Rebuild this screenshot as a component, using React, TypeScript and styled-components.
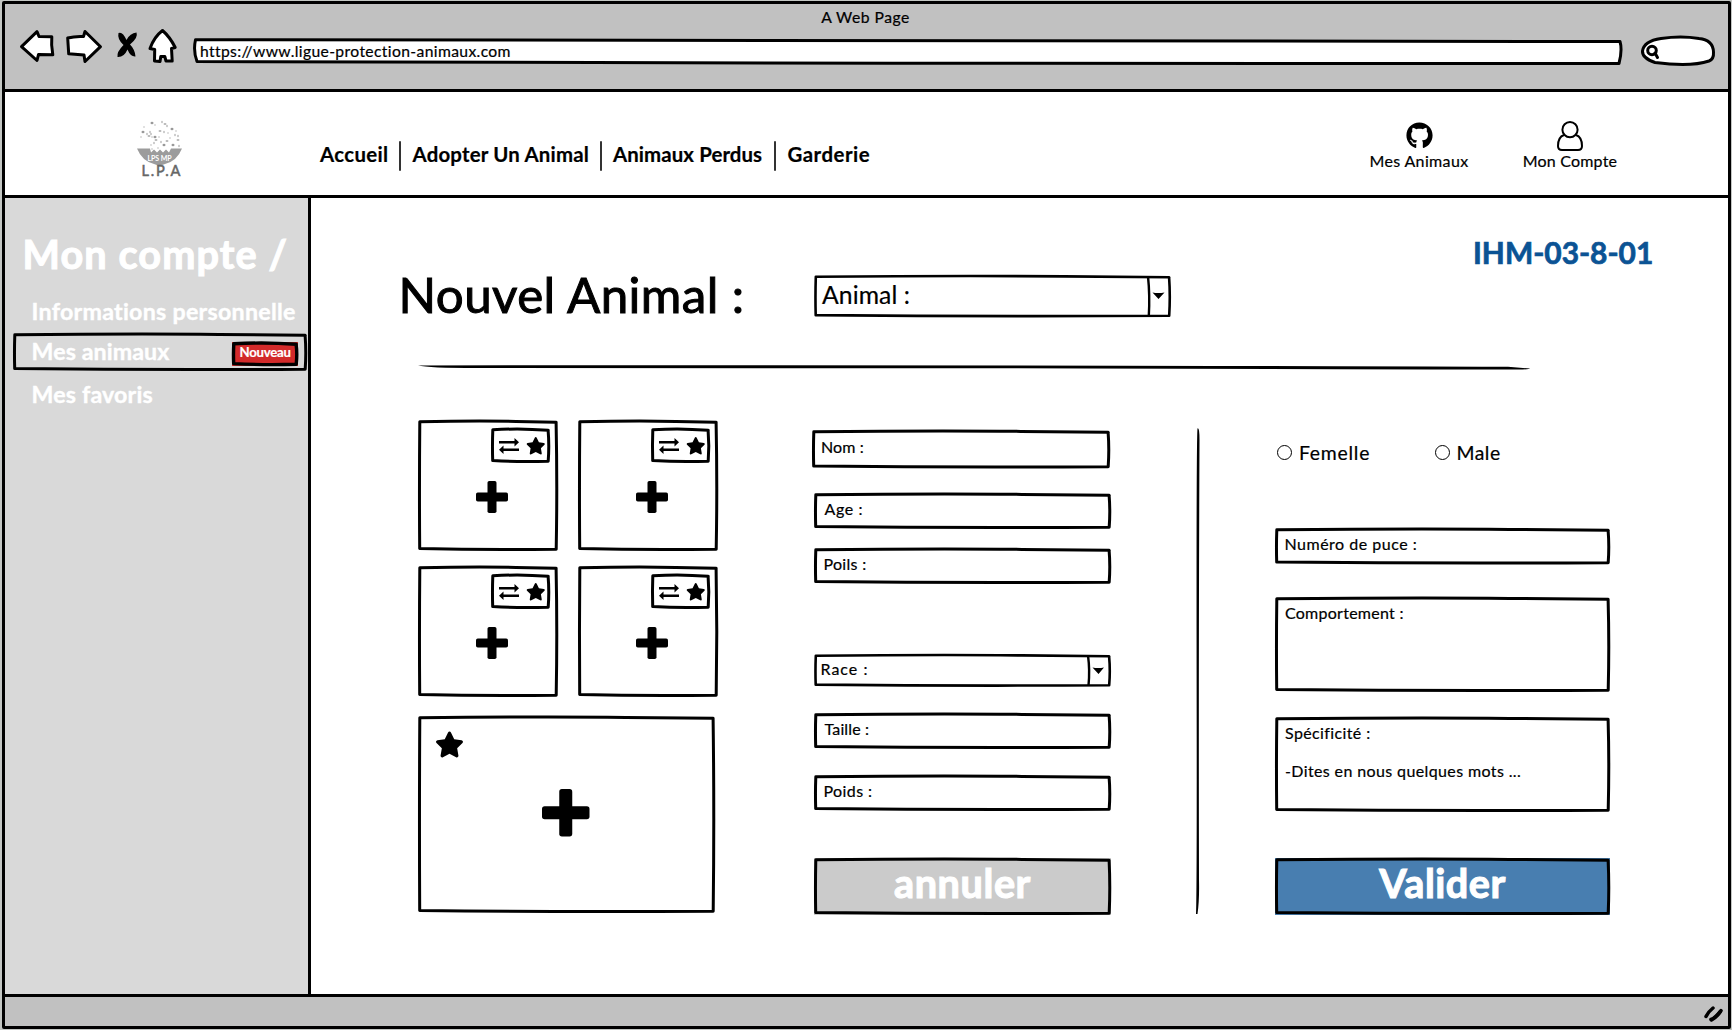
import React from 'react';
import styled, { createGlobalStyle } from 'styled-components';
import { FaGithub, FaStar } from 'react-icons/fa';

const GlobalStyle = createGlobalStyle`
  * { box-sizing: border-box; }
  body { margin: 0; background: #fff; font-family: Lato, "Open Sans", sans-serif; color: #000; }
  svg { display: block; overflow: visible; flex: none; }
`;

/* ---------- text ---------- */

const Label = styled.span<{ $size?: number; $bold?: boolean; $space?: number; $color?: string; $stroke?: number }>`
  display: block;
  flex: none;
  white-space: pre;
  line-height: 1.2;
  font-size: ${p => p.$size ?? 16}px;
  font-weight: ${p => (p.$bold ? 700 : 400)};
  letter-spacing: ${p => p.$space ?? 0.3}px;
  color: ${p => p.$color ?? '#000'};
  -webkit-text-stroke: ${p => p.$stroke ?? 0.2}px currentColor;
`;

/* ---------- hand-drawn outline ---------- */

const OutlineSvg = styled.svg`
  position: absolute;
  inset: 0;
  pointer-events: none;
`;

function Outline({ w, h, stroke = 3 }: { w: number; h: number; stroke?: number }) {
  return (
    <OutlineSvg width={w} height={h} fill="none" stroke="#000" strokeWidth={stroke} strokeLinejoin="round">
      <path
        d={`M1.8 1.8 Q${w * 0.4} 0.5 ${w * 0.7} 1.4 T${w - 1.9} 2.2 Q${w - 0.6} ${h * 0.5} ${w - 1.8} ${h - 1.8}
            Q${w * 0.5} ${h - 0.8} 1.7 ${h - 2.4} Q1.2 ${h * 0.5} 1.8 1.8 Z`}
      />
    </OutlineSvg>
  );
}

/* ---------- browser frame ---------- */

const Screen = styled.div`
  width: 1732px;
  height: 1030px;
  padding: 1px 1px 1px 2px;
  background: #c3c6c3;
`;
const Frame = styled.div`
  display: flex;
  flex-direction: column;
  height: 1028px;
  border: 3px solid #000;
  border-radius: 2px;
  background: #fff;
`;
const Chrome = styled.div`
  height: 88px;
  flex: none;
  background: #c1c1c1;
  border-bottom: 3px solid #000;
`;
const TitleLine = styled.div`
  height: 24px;
  padding: 2px 2px 0 0;
  display: flex;
  justify-content: center;
  align-items: center;
`;
const NavRow = styled.div`
  display: flex;
  align-items: flex-start;
  padding-left: 14px;
`;
const NavIcon = styled.svg<{ $left?: number; $top: number }>`
  margin: ${p => p.$top}px 0 0 ${p => p.$left ?? 0}px;
`;
const UrlBar = styled.div`
  position: relative;
  width: 1430px;
  height: 27px;
  margin: 10px 0 0 15.5px;
  padding: 4px 0 0 7.5px;
`;
const UrlShape = styled.svg`
  position: absolute;
  inset: 0;
  z-index: 0;
`;
const UrlText = styled(Label)`
  position: relative;
`;

/* ---------- site header ---------- */

const Header = styled.header`
  display: flex;
  align-items: flex-start;
  height: 106px;
  flex: none;
  padding-left: 132px;
  border-bottom: 3px solid #000;
`;
const Logo = styled.div`
  width: 46px;
  margin-top: 29px;
`;
const LogoText = styled(Label)`
  margin: -9px 0 0 4.5px;
`;
const Menu = styled.nav`
  display: flex;
  margin: 49px 0 0 136px;
`;
const MenuItem = styled.div<{ $w: number }>`
  width: ${p => p.$w}px;
  padding: 1px 0 0 1px;
`;
const MenuRule = styled.i`
  width: 2px;
  height: 30px;
  margin-right: 10.5px;
  border-radius: 2px;
  background: #333;
`;
const Shortcut = styled.a<{ $left: number; $w: number }>`
  display: flex;
  flex-direction: column;
  align-items: center;
  justify-content: flex-end;
  width: ${p => p.$w}px;
  height: 78px;
  margin-left: ${p => p.$left}px;
`;
const ShortcutIcon = styled.div`
  margin-bottom: 2px;
`;

/* ---------- body ---------- */

const Body = styled.div`
  display: flex;
  flex: 1;
  min-height: 0;
`;
const Sidebar = styled.aside`
  width: 306px;
  flex: none;
  padding-top: 32px;
  border-right: 3px solid #000;
  background: #d9d9d9;
`;
const SideTitle = styled.div`
  padding-left: 17.5px;
  height: 67px;
`;
const SideItem = styled.div`
  padding: 1px 0 0 26.5px;
  height: 36px;
`;
const ActiveItem = styled.div`
  position: relative;
  display: flex;
  justify-content: space-between;
  width: 294px;
  height: 38px;
  margin: 0 0 9px 8px;
  padding: 5px 9px 0 18.5px;
`;
const Tag = styled.div`
  position: relative;
  display: flex;
  justify-content: center;
  width: 66px;
  height: 24px;
  margin-top: 3.5px;
  padding-top: 3px;
  background: #d22a2a;
`;

const Main = styled.main`
  flex: 1;
  min-width: 0;
  padding-left: 86px;
`;
const Heading = styled.div`
  display: flex;
  align-items: flex-start;
  height: 166px;
`;
const PageTitle = styled.div`
  width: 417px;
  padding: 67px 0 0 1.5px;
`;
const Combo = styled.div<{ $w: number; $h: number; $top: number; $tx: number; $ty: number; $indent?: number }>`
  position: relative;
  flex: none;
  display: flex;
  justify-content: space-between;
  width: ${p => p.$w}px;
  height: ${p => p.$h}px;
  margin: ${p => p.$top}px 0 0 ${p => p.$indent ?? 0}px;
  padding: ${p => p.$ty}px 0 0 ${p => p.$tx}px;
`;
const ComboArrow = styled.svg<{ $shift: number }>`
  margin-top: -${p => p.$shift}px;
`;
const PageCode = styled.div`
  margin: 37px 0 0 302px;
`;
const RuleSvg = styled.svg`
  margin-left: 21px;
`;
const Form = styled.form`
  display: flex;
  align-items: flex-start;
  padding: 49.5px 0 0 21px;
`;

/* ---------- photo slots ---------- */

const Gallery = styled.div`
  display: grid;
  grid-template-columns: 140px 140px;
  grid-template-rows: 131px 131px 200px;
  column-gap: 20px;
  row-gap: 15.5px;
  width: 300px;
`;
const Slot = styled.div`
  position: relative;
  display: flex;
  flex-direction: column;
  align-items: flex-end;
  padding: 8px 8.5px 0 0;
`;
const SlotTools = styled.div`
  position: relative;
  display: flex;
  gap: 7px;
  width: 59px;
  height: 35px;
  margin-bottom: 18px;
  padding: 8px 0 0 8.5px;
`;
const SlotPlus = styled.div`
  margin-right: 41.5px;
`;
const MainSlot = styled.div`
  position: relative;
  grid-column: 1 / 3;
  width: 297px;
  height: 197px;
  margin-top: 3px;
  padding: 0 1px 2px 0;
  display: flex;
  align-items: center;
  justify-content: center;
`;
const MainStar = styled.div`
  position: absolute;
  left: 17px;
  top: 14px;
`;

/* ---------- fields ---------- */

const Column = styled.div<{ $w: number; $left: number }>`
  width: ${p => p.$w}px;
  flex: none;
  margin-left: ${p => p.$left}px;
`;
const Box = styled.div<{ $h: number; $top: number; $tx: number; $ty: number; $indent?: number }>`
  position: relative;
  height: ${p => p.$h}px;
  margin: ${p => p.$top}px 0 0 ${p => p.$indent ?? 0}px;
  padding: ${p => p.$ty}px 0 0 ${p => p.$tx}px;
`;
const Button = styled.div<{ $w: number; $top: number; $bg: string; $indent?: number }>`
  position: relative;
  display: flex;
  justify-content: center;
  width: ${p => p.$w}px;
  height: 57px;
  margin: ${p => p.$top}px 0 0 ${p => p.$indent ?? 0}px;
  padding-top: 1px;
  background: ${p => p.$bg};
`;
const Radios = styled.div`
  display: flex;
  height: 24px;
  margin-top: 21.5px;
  padding-left: 2px;
`;
const Radio = styled.label<{ $w: number }>`
  display: flex;
  gap: 7px;
  width: ${p => p.$w}px;
`;
const RadioDot = styled.i`
  width: 15px;
  height: 15px;
  margin-top: 4px;
  border: 1.2px solid #000;
  border-radius: 50%;
`;

/* ---------- footer ---------- */

const Footer = styled.footer`
  display: flex;
  justify-content: flex-end;
  height: 32px;
  flex: none;
  padding: 9px 4px 0 0;
  border-top: 3px solid #000;
  background: #c1c1c1;
`;

/* ---------- drawings ---------- */

function Plus({ size, arm }: { size: number; arm: number }) {
  const o = (size - arm) / 2;
  return (
    <svg width={size} height={size}>
      <rect x={o} width={arm} height={size} rx={size / 18} />
      <rect y={o} width={size} height={arm} rx={size / 18} />
    </svg>
  );
}

function Swap() {
  return (
    <svg width="20" height="19" viewBox="0 0 20 19">
      <path d="M0 5h15.500V2l4.500 4.300-4.500 4.200V7.600H0z M20 12.500H4.500V9.600L0 13.800l4.500 4.200V15.100H20z" />
    </svg>
  );
}

function LogoArt() {
  const specks = [
    [15, 2], [18, 4], [25, 1], [28, 3], [30, 5], [7, 6], [6, 11], [4, 16], [10, 13], [12, 15], [14, 13], [15, 16], [18, 16],
    [22, 16], [13, 11], [23, 10], [27, 11], [31, 12], [35, 8], [39, 10], [41, 15], [41, 19], [38, 14], [33, 17], [36, 24],
    [14, 24], [17, 22], [19, 19], [24, 21], [15, 28], [27, 24], [21, 27], [42, 25], [30, 20],
  ];
  return (
    <svg width="45" height="50" viewBox="0 0 45 50">
      {specks.map(([x, y], i) => (
        <ellipse key={i} cx={x} cy={y} rx={i % 3 ? 0.8 : 1.5} ry={i % 2 ? 0.7 : 1.3} fill={i % 3 ? '#bbb' : '#999'} />
      ))}
      <path d="M0 27.500h13l1 4 3-3 3 3 3-3 3 3 3-3 3 3 2-4h11Q40 40 28 43L22.500 45 17 43Q5 40 0 27.500z" fill="#9c9c9c" />
      <text x="10.500" y="40" fontSize="7" fontWeight="700" fill="#fff" textLength="24">LPS MP</text>
    </svg>
  );
}

function Slots() {
  return (
    <Gallery>
      {[0, 1, 2, 3].map(i => (
        <Slot key={i}>
          <Outline w={140} h={131} />
          <SlotTools>
            <Outline w={59} h={35} />
            <Swap />
            <FaStar size={19.5} />
          </SlotTools>
          <SlotPlus><Plus size={32} arm={9} /></SlotPlus>
        </Slot>
      ))}
      <MainSlot>
        <Outline w={297} h={197} />
        <MainStar><FaStar size={29} /></MainStar>
        <Plus size={47.5} arm={13} />
      </MainSlot>
    </Gallery>
  );
}

type FieldProps = { text: string; w: number; h: number; top: number; tx: number; ty?: number; space: number; indent?: number };
function Field({ text, w, h, top, tx, ty = 6, space, indent }: FieldProps) {
  return (
    <Box $h={h} $top={top} $tx={tx} $ty={ty} $indent={indent}>
      <Outline w={w} h={h} />
      <Label $space={space}>{text}</Label>
    </Box>
  );
}

export default function App() {
  return (
    <Screen>
      <GlobalStyle />
      <Frame>
        <Chrome>
          <TitleLine><Label $size={15.7} $space={0.5}>A Web Page</Label></TitleLine>
          <NavRow>
            <NavIcon $top={1} width="36" height="35" fill="#fff" stroke="#000" strokeWidth="3" strokeLinejoin="round">
              <path d="M2.500 17.700 18 2.700l2 4.800 12.800.3q-.8 8 1 18L19.500 25.500 18 31.500Z" />
            </NavIcon>
            <NavIcon $top={1} $left={10} width="38" height="35" fill="#fff" stroke="#000" strokeWidth="3" strokeLinejoin="round">
              <path d="M2.700 9Q10 7 18.500 7.500L20 2.500 35.500 17.700 20 32.500 19 26 3.700 24.800Z" />
            </NavIcon>
            <NavIcon $top={4} $left={14} width="20" height="26">
              <path d="M1.500 1q4-2 8 7 3.500-7 10-7.500 2 5-6.500 12 5 5 5.500 12-5 .5-8-7-3.500 8-10 7.500-1-5 6-12Q0 7 1.500 1z" />
            </NavIcon>
            <NavIcon $top={0} $left={11} width="29" height="35" fill="#fff" stroke="#000" strokeWidth="3" strokeLinejoin="round">
              <path d="M14.500 2.500Q22 9 27.200 19.500L23.500 20.500 24.200 33H18L16.800 28.500H12.800L12 33.500 6.500 33 6.700 21.500 2 20.500Q6 9 14.500 2.500Z" />
            </NavIcon>
            <UrlBar>
              <UrlShape width="1430" height="27" fill="#fff" stroke="#000" strokeWidth="3" strokeLinejoin="round">
                <path d="M2.500 1.700Q700 .6 1427 3.500 1429.500 12 1426 25.500L700 25.300 4 23.500Q0 13 2.500 1.700Z" />
              </UrlShape>
              <UrlText $size={15.7} $space={0.36}>https://www.ligue-protection-animaux.com</UrlText>
            </UrlBar>
            <NavIcon $top={8} $left={18} width="74" height="30" fill="#fff" stroke="#000" strokeWidth="3" strokeLinejoin="round">
              <path d="M14 26.500Q1 22 1.500 15 3 5 20 2.500 40-.5 58 2.500 72 4 72.500 16 73 23 68 25 50 31 14 26.500Z" />
              <circle cx="11" cy="14.500" r="4.300" />
              <path d="M14 17l2.500 4.500" strokeLinecap="round" />
            </NavIcon>
          </NavRow>
        </Chrome>

        <Header>
          <Logo>
            <LogoArt />
            <LogoText $size={14.6} $space={1.8} $color="#666" $stroke={0.5}>L.P.A</LogoText>
          </Logo>
          <Menu>
            <MenuItem $w={80}><Label $size={20.4} $bold $space={0.34}>Accueil</Label></MenuItem>
            <MenuRule />
            <MenuItem $w={188}><Label $size={20.4} $bold $space={0.2}>Adopter Un Animal</Label></MenuItem>
            <MenuRule />
            <MenuItem $w={162}><Label $size={20.4} $bold $space={0.1}>Animaux Perdus</Label></MenuItem>
            <MenuRule />
            <MenuItem $w={88}><Label $size={20.4} $bold $space={0.5}>Garderie</Label></MenuItem>
          </Menu>
          <Shortcut $left={494.5} $w={100}>
            <ShortcutIcon><FaGithub size={27} /></ShortcutIcon>
            <Label $space={0.35}>Mes Animaux</Label>
          </Shortcut>
          <Shortcut $left={53} $w={96}>
            <svg width="26" height="30" fill="#fff" stroke="#000" strokeWidth="2">
              <path d="M7 14Q1 16 1 25q0 4 4 4h16q4 0 4-4 0-9-6-11" />
              <circle cx="13" cy="8.700" r="7.600" />
            </svg>
            <Label $space={0.2}>Mon Compte</Label>
          </Shortcut>
        </Header>

        <Body>
          <Sidebar>
            <SideTitle><Label $size={39.6} $bold $space={1.13} $color="#fff" $stroke={1.1}>Mon compte /</Label></SideTitle>
            <SideItem><Label $size={23.2} $bold $space={0.28} $color="#fff" $stroke={0.4}>Informations personnelle</Label></SideItem>
            <ActiveItem>
              <Outline w={294} h={38} />
              <Label $size={23.2} $bold $space={0.1} $color="#fff" $stroke={0.4}>Mes animaux</Label>
              <Tag>
                <Outline w={66} h={24} stroke={3.4} />
                <Label $size={13.2} $bold $space={-0.25} $color="#fff">Nouveau</Label>
              </Tag>
            </ActiveItem>
            <SideItem><Label $size={23.2} $bold $space={0.17} $color="#fff" $stroke={0.4}>Mes favoris</Label></SideItem>
          </Sidebar>

          <Main>
            <Heading>
              <PageTitle><Label $size={49.3} $space={0.4} $stroke={1}>Nouvel Animal :</Label></PageTitle>
              <Combo $w={357} $h={43} $top={76.5} $tx={8} $ty={5}>
                <Outline w={357} h={42.5} stroke={2.6} />
                <Label $size={24.7} $space={0.1}>Animal :</Label>
                <ComboArrow $shift={5} width="24" height="43">
                  <path d="M1 1.500Q3 20 1.800 41" fill="none" stroke="#000" strokeWidth="2.400" />
                  <path d="M5.500 17.500Q11 18.500 17.500 17.500L11.500 24Z" />
                </ComboArrow>
              </Combo>
              <PageCode><Label $size={29.9} $bold $space={0} $color="#0b5394" $stroke={0.7}>IHM-03-8-01</Label></PageCode>
            </Heading>
            <RuleSvg width="1112" height="6">
              <path d="M0 1.500Q300 1 600 1.500 900 2 1090 2.800L1112 4.500Q1112 5.500 1100 5.500 900 5 600 4.300L60 4Q10 4 0 1.500Z" />
            </RuleSvg>
            <Form>
              <Slots />
              <Column $w={300} $left={94}>
                <Field text="Nom :" w={298} h={38.5} top={10} tx={9} ty={7} space={0.1} />
                <Field text="Age :" w={297} h={36} top={24.5} tx={10.5} space={0.6} indent={2} />
                <Field text="Poils :" w={297} h={36} top={19} tx={9.5} space={0.3} indent={2} />
                <Combo $w={297} $h={33} $top={70} $tx={6.5} $ty={5} $indent={2}>
                  <Outline w={297} h={33} stroke={2.6} />
                  <Label $space={1}>Race :</Label>
                  <ComboArrow $shift={5} width="24" height="33">
                    <path d="M1 1.500Q3 16 1.500 31.500" fill="none" stroke="#000" strokeWidth="2.400" />
                    <path d="M5.500 13.500Q11 14.500 17 13.500L11.500 20Z" />
                  </ComboArrow>
                </Combo>
                <Field text="Taille :" w={297} h={36} top={26} tx={10.5} space={0.15} indent={2} />
                <Field text="Poids :" w={297} h={36} top={26.5} tx={9.5} ty={6} space={0.4} indent={2} />
                <Button $w={297} $top={46.5} $bg="#cbcbcb" $indent={2}>
                  <Outline w={297} h={57} />
                  <Label $size={39.6} $bold $space={0.6} $color="#fff" $stroke={1.1}>annuler</Label>
                </Button>
              </Column>
              <Column $w={4} $left={84}>
                <svg width="4" height="495">
                  <path d="M1.500 8.500Q3.500 7 3.500 20 2.500 250 3 460 3.500 480 1.500 494L0 494Q1 470 .6 250 .3 20 1.500 8.500Z" />
                </svg>
              </Column>
              <Column $w={335} $left={75}>
                <Radios>
                  <Radio $w={157.5}><RadioDot /><Label $size={19.4} $space={0.75}>Femelle</Label></Radio>
                  <Radio $w={80}><RadioDot /><Label $size={19.4} $space={0.5}>Male</Label></Radio>
                </Radios>
                <Field text="Numéro de puce :" w={335} h={36.5} top={62.5} tx={9.5} space={0.5} />
                <Field text="Comportement :" w={335} h={95} top={32.5} tx={10} space={0.26} />
                <Field text={'Spécificité :\n\n-Dites en nous quelques mots ...'} w={335} h={95} top={25} tx={10} ty={6} space={0.38} />
                <Button $w={335} $top={46} $bg="#487eb0">
                  <Outline w={335} h={57} />
                  <Label $size={39.6} $bold $space={0.5} $color="#fff" $stroke={1.1}>Valider</Label>
                </Button>
              </Column>
            </Form>
          </Main>
        </Body>

        <Footer>
          <svg width="20" height="16" stroke="#000" strokeWidth="3.500" strokeLinecap="round" fill="none">
            <path d="M2 10.500Q4 6 9 2M7 13.500Q11 12 17 4.500" />
            <path d="M7.500 14Q13 11 16.500 5.500" />
          </svg>
        </Footer>
      </Frame>
    </Screen>
  );
}
